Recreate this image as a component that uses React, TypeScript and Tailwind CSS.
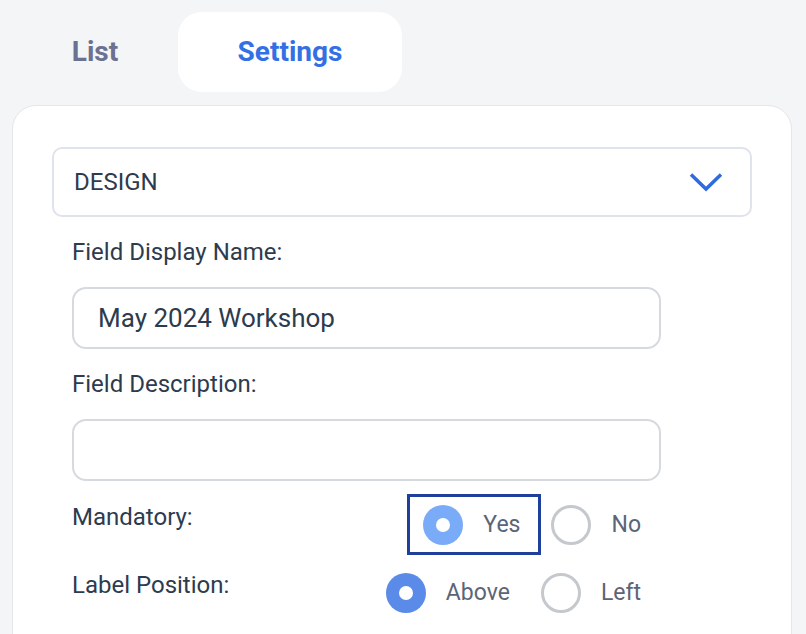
import React from "react";

const font = { fontFamily: "Roboto, 'Noto Sans', sans-serif" };

const Radio = ({ checked, light }: { checked: boolean; light?: boolean }) =>
  checked ? (
    <span
      className={`flex h-[40px] w-[40px] shrink-0 items-center justify-center rounded-full ${
        light ? "bg-[#7aabf8]" : "bg-[#5b8be8]"
      }`}
    >
      <span className="h-[14px] w-[14px] rounded-full bg-white" />
    </span>
  ) : (
    <span className="h-[40px] w-[40px] shrink-0 rounded-full border-[3px] border-[#c5c8cd] bg-white" />
  );

const Option = ({
  label,
  checked,
  light,
  focused,
}: {
  label: string;
  checked: boolean;
  light?: boolean;
  focused?: boolean;
}) => (
  <label className="relative flex items-center gap-[20px]">
    {focused && (
      <span className="absolute -left-[16px] -right-[21px] -top-[11px] -bottom-[10px] border-[3px] border-[#1e409c]" />
    )}
    <Radio checked={checked} light={light} />
    <span className="text-[23px] leading-[30px] text-[#5b6577]">{label}</span>
  </label>
);

const App = () => {
  return (
    <div className="min-h-screen bg-[#f4f5f7] text-[#2d3b4e]" style={font}>
      {/* tabs */}
      <div className="flex pl-[12px] pt-[12px]">
        <button className="h-[80px] w-[166px] text-[28px] font-bold text-[#6b7190]">List</button>
        <button className="h-[80px] w-[224px] rounded-[24px] bg-white text-[28px] font-bold text-[#3470e4]">
          Settings
        </button>
      </div>

      <div className="ml-[12px] mr-[14px] mt-[13px] rounded-t-[24px] border border-[#e4e6ea] bg-white px-[39px] pb-[40px] pt-[41px]">
        {/* section dropdown */}
        <div className="flex h-[70px] items-center justify-between rounded-[10px] border-2 border-[#dfe3ec] pl-[20px] pr-[27px]">
          <span className="text-[24px]">DESIGN</span>
          <svg width="34" height="20" viewBox="0 0 34 20" fill="none">
            <path d="M2 2.5L17 17L32 2.5" stroke="#2f6ae0" strokeWidth="3.5" />
          </svg>
        </div>

        <div className="w-[609px] pl-[20px]">
          <div className="mt-[20px] text-[24px] leading-[30px]">Field Display Name:</div>
          <div className="mt-[20px] flex h-[62px] items-center rounded-[14px] border-2 border-[#d6d9de] px-[24px] text-[26px]">
            May 2024 Workshop
          </div>

          <div className="mt-[20px] text-[24px] leading-[30px]">Field Description:</div>
          <div className="mt-[20px] h-[62px] rounded-[14px] border-2 border-[#d6d9de]" />

          <div className="mt-[21px] flex items-start justify-between pr-[20px]">
            <span className="text-[24px] leading-[30px]">Mandatory:</span>
            <div className="mt-[3px] flex items-center gap-[31px]">
              <Option label="Yes" checked light focused />
              <Option label="No" checked={false} />
            </div>
          </div>

          <div className="mt-[25px] flex items-start justify-between pr-[20px]">
            <span className="text-[24px] leading-[30px]">Label Position:</span>
            <div className="mt-[3px] flex items-center gap-[31px]">
              <Option label="Above" checked />
              <Option label="Left" checked={false} />
            </div>
          </div>
        </div>
      </div>
    </div>
  );
};

export default App;
